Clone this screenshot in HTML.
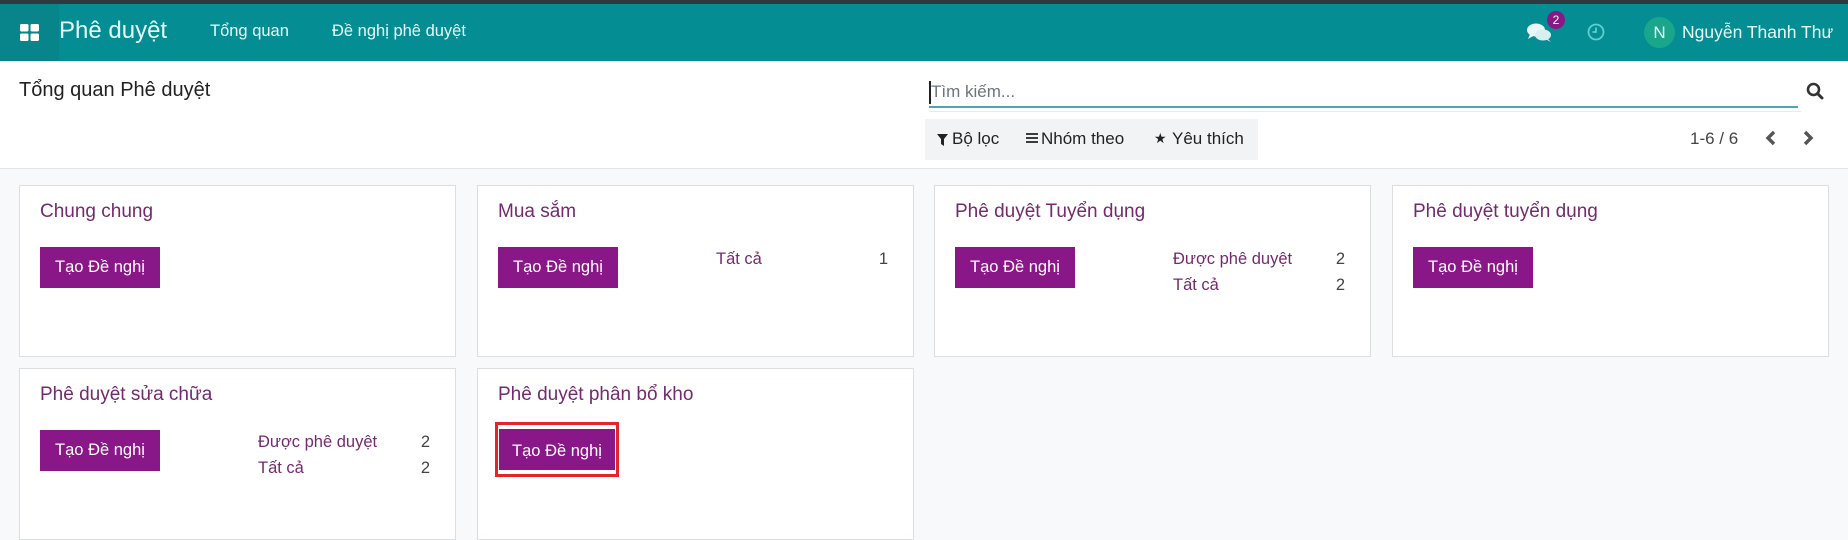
<!DOCTYPE html>
<html><head><meta charset="utf-8"><style>
*{box-sizing:border-box;margin:0;padding:0}
body{width:1848px;height:538px;overflow:hidden;background:#f8f9fa;font-family:"Liberation Sans","DejaVu Sans",sans-serif;position:relative}
.a{position:absolute;white-space:nowrap}
.top{left:0;top:0;width:1848px;height:4px;background:#2f3a40}
.nav{left:0;top:4px;width:1848px;height:57px;background:#048d92}
.cp{left:0;top:61px;width:1848px;height:108px;background:#fff;border-bottom:1px solid #e2e4e6}
.card{position:absolute;width:437px;height:172px;background:#fff;border:1px solid #dcdfe2}
.card .t{position:absolute;left:20px;top:15px;font-size:19px;color:#732a6e}
.btn{position:absolute;left:20px;top:61px;width:120px;height:41px;background:#8a1787;color:#fff;font-size:16.5px;line-height:41px;text-align:center}
.lb{position:absolute;left:238px;font-size:16.5px;color:#732a6e}
.nm{position:absolute;right:25px;font-size:16.5px;color:#444}
</style></head><body>
<div class="a top"></div>
<div class="a nav"></div>
<div class="a" style="left:0;top:4px;width:59px;height:57px;background:#07858a"></div>
<svg class="a" style="left:20px;top:24px" width="19" height="17" viewBox="0 0 19 17"><rect x="0" y="0" width="8.5" height="7.5" rx="1.5" fill="#fff"/><rect x="10.5" y="0" width="8.5" height="7.5" rx="1.5" fill="#fff"/><rect x="0" y="9.5" width="8.5" height="7.5" rx="1.5" fill="#fff"/><rect x="10.5" y="9.5" width="8.5" height="7.5" rx="1.5" fill="#fff"/></svg>
<div class="a" style="left:59px;top:17px;font-size:24px;color:#e6fbfb">Phê duyệt</div>
<div class="a" style="left:210px;top:22px;font-size:16.5px;color:#e6fbfb">Tổng quan</div>
<div class="a" style="left:332px;top:22px;font-size:16.5px;color:#e6fbfb">Đề nghị phê duyệt</div>
<svg class="a" style="left:1527px;top:22px" width="26" height="22" viewBox="0 0 26 22"><ellipse cx="9" cy="8" rx="9" ry="6.5" fill="#e8f6f6"/><path d="M3 12 L1 17 L8 13Z" fill="#e8f6f6"/><ellipse cx="16" cy="13" rx="8" ry="5.5" fill="#d6efef"/><path d="M20 16 L24 20 L18 17Z" fill="#d6efef"/></svg>
<div class="a" style="left:1547px;top:11px;width:18px;height:18px;border-radius:9px;background:#8a1787;color:#fff;font-size:12px;line-height:18px;text-align:center">2</div>
<svg class="a" style="left:1587px;top:23px" width="18" height="18" viewBox="0 0 18 18"><circle cx="9" cy="9" r="7.5" fill="none" stroke="#5ccfd1" stroke-width="1.8"/><path d="M9 4.5V9H5.5" fill="none" stroke="#5ccfd1" stroke-width="1.8"/></svg>
<div class="a" style="left:1644px;top:17px;width:31px;height:31px;border-radius:16px;background:#1aa68a;color:#e8fff8;font-size:17px;line-height:31px;text-align:center">N</div>
<div class="a" style="left:1682px;top:22px;font-size:17.5px;color:#e6fbfb">Nguyễn Thanh Thư</div>

<div class="a cp"></div>
<div class="a" style="left:19px;top:79px;font-size:20px;color:#222">Tổng quan Phê duyệt</div>
<div class="a" style="left:929px;top:81px;width:2px;height:23px;background:#222"></div>
<div class="a" style="left:931px;top:82px;font-size:17px;color:#6c757d">Tìm kiếm...</div>
<div class="a" style="left:929px;top:106px;width:869px;height:1.5px;background:#4fa5ad"></div>
<div class="a" style="left:929px;top:111px;width:872px;height:1px;background:#e8e9ea"></div>
<svg class="a" style="left:1806px;top:82px" width="18" height="18" viewBox="0 0 18 18"><circle cx="7.5" cy="7.5" r="5.5" fill="none" stroke="#333" stroke-width="2.6"/><path d="M11.5 11.5 L16 16" stroke="#333" stroke-width="3" stroke-linecap="round"/></svg>
<div class="a" style="left:925px;top:119px;width:333px;height:41px;background:#f1f3f5"></div>
<svg class="a" style="left:937px;top:134px" width="11" height="12" viewBox="0 0 11 12"><path d="M0 0H11L7 5V12L4 10V5Z" fill="#222"/></svg>
<div class="a" style="left:952px;top:129px;font-size:17px;color:#222">Bộ lọc</div>
<svg class="a" style="left:1026px;top:133px" width="12" height="10" viewBox="0 0 12 10"><path d="M0 1H12M0 5H12M0 9H12" stroke="#222" stroke-width="1.8"/></svg>
<div class="a" style="left:1041px;top:129px;font-size:17px;color:#222">Nhóm theo</div>
<div class="a" style="left:1154px;top:130px;font-size:14px;color:#222">★</div>
<div class="a" style="left:1172px;top:129px;font-size:17px;color:#222">Yêu thích</div>
<div class="a" style="left:1690px;top:129px;font-size:17px;color:#444">1-6 / 6</div>
<svg class="a" style="left:1765px;top:130px" width="12" height="16" viewBox="0 0 12 16"><path d="M9 2 L3 8 L9 14" fill="none" stroke="#555" stroke-width="3.4"/></svg>
<svg class="a" style="left:1802px;top:130px" width="12" height="16" viewBox="0 0 12 16"><path d="M3 2 L9 8 L3 14" fill="none" stroke="#555" stroke-width="3.4"/></svg>

<div class="card" style="left:19px;top:185px"><div class="t">Chung chung</div><div class="btn">Tạo Đề nghị</div></div>
<div class="card" style="left:477px;top:185px"><div class="t">Mua sắm</div><div class="btn">Tạo Đề nghị</div>
<div class="lb" style="top:64px">Tất cả</div><div class="nm" style="top:64px">1</div></div>
<div class="card" style="left:934px;top:185px"><div class="t">Phê duyệt Tuyển dụng</div><div class="btn">Tạo Đề nghị</div>
<div class="lb" style="top:64px">Được phê duyệt</div><div class="nm" style="top:64px">2</div>
<div class="lb" style="top:90px">Tất cả</div><div class="nm" style="top:90px">2</div></div>
<div class="card" style="left:1392px;top:185px"><div class="t">Phê duyệt tuyển dụng</div><div class="btn">Tạo Đề nghị</div></div>
<div class="card" style="left:19px;top:368px"><div class="t">Phê duyệt sửa chữa</div><div class="btn">Tạo Đề nghị</div>
<div class="lb" style="top:64px">Được phê duyệt</div><div class="nm" style="top:64px">2</div>
<div class="lb" style="top:90px">Tất cả</div><div class="nm" style="top:90px">2</div></div>
<div class="card" style="left:477px;top:368px"><div class="t">Phê duyệt phân bổ kho</div>
<div style="position:absolute;left:17px;top:53px;width:124px;height:55px;border:3px solid #e0262b"></div>
<div class="btn" style="left:21px;top:58px;width:116px;height:45px;line-height:45px;border-top:2px solid #fff;border-bottom:2px solid #fff">Tạo Đề nghị</div></div>
</body></html>
